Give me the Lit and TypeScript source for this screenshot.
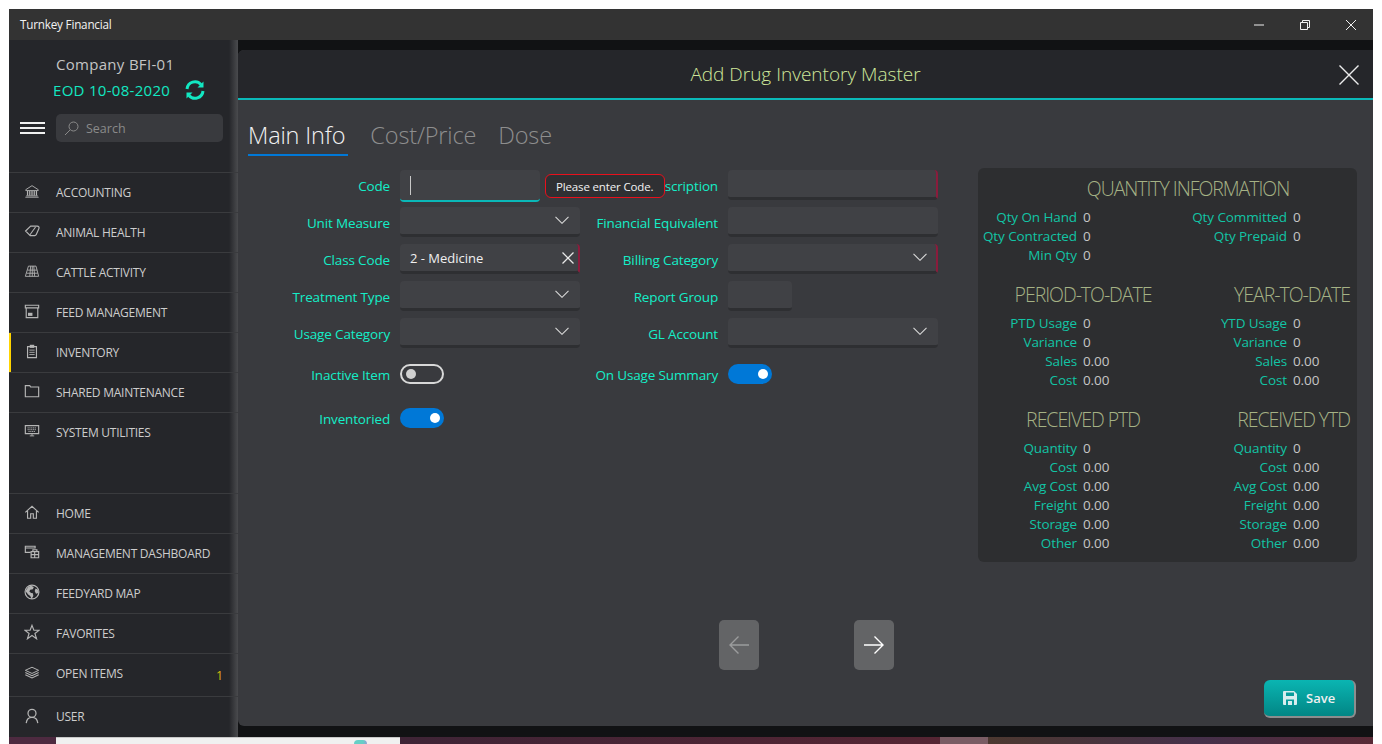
import { LitElement, html, css, svg } from 'lit';
import { customElement } from 'lit/decorators.js';

const NAV_ICONS: Record<string, unknown> = {
  bank: svg`<path d="M2 7.5 9 3l7 4.5v1H2z" fill="none" stroke="currentColor"/><path d="M4 9v5M6.5 9v5M9 9v5M11.5 9v5M14 9v5" stroke="currentColor" stroke-width="1.4"/><path d="M2.5 14.5h13M1.5 16h15" stroke="currentColor"/>`,
  tag: svg`<path d="M1.8 9 7.500 3.500h7.500a2 2 0 0 1 1.800 2.800l-3 6.700a2 2 0 0 1-1.800 1.200H7z" fill="none" stroke="currentColor" stroke-width="1.300"/><path d="M6.500 13.500 13 4.500" stroke="currentColor" stroke-width="1.200"/>`,
  grid: svg`<path d="M5 3.500h8.500L16.500 15h-15zM4 8h10.500M3 11.500h12.500M7.500 3.500 6.500 15M11 3.500 12 15M9.300 3.500V15" fill="none" stroke="currentColor"/>`,
  feed: svg`<path d="M1.500 2.500h15v3h-15zM2.500 5.500h13v11h-13z" fill="none" stroke="currentColor" stroke-width="1.300"/><path d="M4.500 11h5v3.500h-5z" fill="currentColor"/>`,
  clip: svg`<path d="M4 4h10v12.500H4z" fill="none" stroke="currentColor" stroke-width="1.300"/><path d="M6.500 2h5v3.500h-5z" fill="currentColor"/><path d="M6 8h6M6 10.500h6M6 13h6" stroke="currentColor"/>`,
  folder: svg`<path d="M1.500 3h5l1 1.500h9v11h-15z" fill="none" stroke="currentColor" stroke-width="1.300"/>`,
  monitor: svg`<path d="M1.500 3h15v9h-15z" fill="none" stroke="currentColor" stroke-width="1.300"/><path d="M4 5.500h10M4 7.500h10M5 9.500h8" stroke="currentColor" stroke-dasharray="1.400 .6"/><path d="M9 12v2.500M6.500 14.500h5" stroke="currentColor"/>`,
  home: svg`<path d="M1.500 9.500 9 2.500l7.500 7M4 8v8h3.500v-5h3v5H14V8" fill="none" stroke="currentColor" stroke-width="1.300"/>`,
  dash: svg`<path d="M1.500 2.500h11v2h-11zM1.500 2.500v7h6" fill="none" stroke="currentColor" stroke-width="1.300"/><path d="M8 8.500h8.500v7H8zM10 8.500V6.500h4.500v2M8 12h8.500M12 8.500V15.500" fill="none" stroke="currentColor" stroke-width="1.300"/>`,
  globe: svg`<circle cx="9" cy="9" r="7.800" fill="none" stroke="currentColor" stroke-width="1.300"/><path d="M5 3 8 2l3 1.500-1 2.500-3 .5-1 2 2 1.500 2 .5.500 3-2 3.500-1.500-3.500-2-1.500L1.500 8zM13 5l3 1.500.5 3.500-3 1-1.500-3z" fill="currentColor"/>`,
  star: svg`<path d="M9 1.500 11.100 7h6l-4.800 3.600 1.800 6L9 13l-5.100 3.600 1.800-6L.9 7h6z" fill="none" stroke="currentColor" stroke-width="1.300"/>`,
  layers: svg`<path d="M9 2.500 16.500 6 9 9.500 1.500 6z" fill="none" stroke="currentColor" stroke-width="1.100"/><path d="m1.500 8.500 7.500 3.500 7.500-3.500M1.500 11 9 14.500l7.500-3.500" fill="none" stroke="currentColor" stroke-width="1.200"/>`,
  user: svg`<circle cx="9" cy="6" r="4.500" fill="none" stroke="currentColor" stroke-width="1.400"/><path d="M2.500 17c.5-4.500 3-6.500 6.500-6.500s6 2 6.500 6.500" fill="none" stroke="currentColor" stroke-width="1.400"/>`,
};

const MENU_TOP = [
  ['bank', 'ACCOUNTING'],
  ['tag', 'ANIMAL HEALTH'],
  ['grid', 'CATTLE ACTIVITY'],
  ['feed', 'FEED MANAGEMENT'],
  ['clip', 'INVENTORY'],
  ['folder', 'SHARED MAINTENANCE'],
  ['monitor', 'SYSTEM UTILITIES'],
];

const MENU_BOTTOM = [
  ['home', 'HOME'],
  ['dash', 'MANAGEMENT DASHBOARD'],
  ['globe', 'FEEDYARD MAP'],
  ['star', 'FAVORITES'],
  ['layers', 'OPEN ITEMS'],
  ['user', 'USER'],
];

type Stat = [string, string];

const RECEIVED: Stat[] = [
  ['Quantity', '0'],
  ['Cost', '0.00'],
  ['Avg Cost', '0.00'],
  ['Freight', '0.00'],
  ['Storage', '0.00'],
  ['Other', '0.00'],
];

const chevron = html`<svg class="chev" width="14" height="8" viewBox="0 0 14 8"><path d="m.5.8 6.500 6.500L13.500.8" fill="none" stroke="currentColor" stroke-width="1.100"/></svg>`;

@customElement('app-root')
export class AppRoot extends LitElement {
  static styles = css`
    :host {
      display: block;
      width: 1382px;
      height: 744px;
      overflow: hidden;
      background: #fff;
      font-family: 'Open Sans', 'Noto Sans', sans-serif;
      color: #d0d0d0;
    }
    .window {
      margin: 9px 9px 0;
      height: 728px;
      display: flex;
      flex-direction: column;
    }
    .titlebar {
      height: 31px;
      flex: none;
      background: #333333;
      display: flex;
      align-items: center;
      padding-left: 11px;
      font-size: 11.7px;
      color: #f2f2f2;
      letter-spacing: -0.2px;
    }
    .title-name { flex: 1; margin-top: -2px; }
    .win-btn {
      width: 46px;
      display: flex;
      justify-content: center;
    }
    .win-btn svg { margin-left: 2px; }
    .body {
      flex: 1;
      display: flex;
      min-height: 0;
    }
    .sidebar {
      width: 229px;
      flex: none;
      background: #25262a;
      display: flex;
      flex-direction: column;
      position: relative;
    }
    .sidebar::after {
      content: '';
      position: absolute;
      top: 0;
      bottom: 0;
      right: 0;
      width: 9px;
      background: linear-gradient(to right, #25262a, #4a4b4e);
      pointer-events: none;
    }
    .brand {
      height: 132px;
      flex: none;
      display: flex;
      flex-direction: column;
    }
    .company {
      margin: 13px 0 0 47px;
      font-size: 15px;
      line-height: 22px;
      letter-spacing: 0.3px;
      color: #c4c4c4;
    }
    .eod {
      display: flex;
      align-items: center;
      margin: 3px 0 0 44px;
      font-size: 15px;
      line-height: 24px;
      letter-spacing: 0.3px;
      color: #12e8c2;
    }
    .eod svg { margin-left: 15px; }
    .search-row {
      display: flex;
      align-items: center;
      margin-top: 12px;
    }
    .burger {
      width: 25px;
      margin-left: 11px;
      height: 12px;
      border-top: 2px solid #f0f0f0;
      border-bottom: 2px solid #f0f0f0;
      position: relative;
      box-sizing: border-box;
    }
    .burger::after {
      content: '';
      position: absolute;
      left: 0;
      right: 0;
      top: 3px;
      height: 2px;
      background: #f0f0f0;
    }
    .search {
      margin-left: 11px;
      width: 167px;
      height: 28px;
      border-radius: 5px;
      background: #393a3e;
      display: flex;
      align-items: center;
      box-sizing: border-box;
      padding: 1px 0 0 8px;
      font-size: 12.5px;
      color: #8a8a8a;
      gap: 7px;
    }
    .menu { flex: none; }
    .menu-gap { flex: 1; }
    .item {
      height: 40px;
      box-sizing: border-box;
      border-top: 1px solid #3a3b3e;
      display: flex;
      align-items: center;
      font-size: 12px;
      color: #cdcdcd;
      letter-spacing: -0.25px;
      padding: 0 0 1px 15px;
      position: relative;
      z-index: 1;
    }
    .item svg { flex: none; margin-right: 16px; margin-top: -2px; color: #b5b5b5; }
    .item.active { box-shadow: inset 2px 0 0 #ffd400; }
    .item.tall { height: 43px; padding-bottom: 3px; }
    .item.last { height: 41px; }
    .count {
      margin-left: auto;
      margin-right: 15px;
      margin-top: 3px;
      color: #d8b80e;
      font-size: 12.5px;
    }
    .main {
      flex: 1;
      min-width: 0;
      background: #111214;
      padding: 10px 0 11px;
      display: flex;
    }
    .modal {
      flex: 1;
      background: #393a3e;
      border-radius: 6px 0 0 6px;
      display: flex;
      flex-direction: column;
      overflow: hidden;
    }
    .modal-head {
      height: 50px;
      box-sizing: border-box;
      flex: none;
      background: #25262a;
      border-bottom: 2px solid #0ab8b8;
      display: flex;
      align-items: center;
      justify-content: center;
      position: relative;
      font-size: 19px;
      font-weight: 300;
      color: #cfe89a;
    }
    .modal-close {
      position: absolute;
      right: 14px;
      top: 15px;
      display: flex;
    }
    .modal-body {
      flex: 1;
      display: flex;
      flex-direction: column;
      padding: 0 16px 0 10px;
      position: relative;
    }
    .tabs {
      display: flex;
      height: 56px;
      flex: none;
      padding-top: 17px;
      box-sizing: border-box;
      gap: 22px;
      font-size: 23.5px;
      line-height: 36px;
      font-weight: 300;
      color: #8e8e8e;
      letter-spacing: -0.15px;
    }
    .tab {
      height: 39px;
      box-sizing: border-box;
    }
    .tab.on {
      color: #f2f2f2;
      border-bottom: 2px solid #0078d7;
      padding: 0 3px 0 0;
    }
    .columns {
      display: flex;
      align-items: flex-start;
      margin-top: 12px;
    }
    .form {
      width: 730px;
      flex: none;
      margin-top: 2px;
      display: grid;
      grid-template-columns: 152px 180px 148px 210px;
      grid-template-rows: repeat(5, 30px) 29px 37px;
      row-gap: 7px;
    }
    .lbl {
      box-sizing: border-box;
      display: flex;
      align-items: center;
      justify-content: flex-end;
      padding: 2px 10px 0 0;
      font-size: 13.5px;
      color: #14eec8;
      letter-spacing: -0.15px;
      white-space: nowrap;
    }
    .field {
      box-sizing: border-box;
      height: 30px;
      background: #404145;
      border-radius: 4px;
      border-bottom: 3px solid #2e2f32;
      display: flex;
      align-items: center;
      padding: 0 11px 0 10px;
      font-size: 13px;
      color: #f0f0f0;
    }
    .field.req { border-right: 2px solid #8a1c3c; padding-right: 9px; }
    .field.short { width: 64px; }
    .field.focus {
      width: 140px;
      height: 32px;
      border-bottom: 2px solid #0ab8b8;
    }
    .caret { width: 1px; height: 19px; background: #c8c8c8; }
    .chev { color: #d8d8d8; margin: -2px 0 0 auto; }
    .clear { margin: 0 -5px 0 auto; }
    .tip {
      position: absolute;
      left: 307px;
      top: 74px;
      width: 120px;
      height: 24px;
      box-sizing: border-box;
      border: 1px solid #e8101c;
      border-radius: 6px;
      background: #2f3033;
      color: #f2f2f2;
      font-size: 11.5px;
      display: flex;
      align-items: center;
      padding-left: 10px;
      letter-spacing: -0.15px;
      white-space: nowrap;
    }
    .sw { align-self: end; height: 20px; }
    .switch {
      box-sizing: border-box;
      width: 44px;
      height: 20px;
      border-radius: 10px;
      display: flex;
      align-items: center;
    }
    .switch.off {
      border: 2px solid #d8d8d8;
      padding-left: 4px;
    }
    .switch.on {
      background: #0078d7;
      justify-content: flex-end;
      padding-right: 4px;
    }
    .knob { width: 10px; height: 10px; border-radius: 50%; background: #fff; }
    .switch.off .knob { background: #d0d0d0; }
    .panel {
      width: 379px;
      height: 394px;
      flex: none;
      box-sizing: border-box;
      background: #2d2e30;
      border-radius: 6px;
      display: grid;
      grid-template-columns: 210px 169px;
      align-content: start;
    }
    .panel h3 {
      margin: 0;
      font-size: 19.5px;
      line-height: 24px;
      font-weight: 300;
      color: #a5b285;
      letter-spacing: -1.05px;
      white-space: nowrap;
    }
    .panel h3.wide { grid-column: 1 / 3; padding: 9px 0 7px 41px; text-align: center; }
    .panel h3.left { text-align: center; }
    .panel h3.right { text-align: right; padding-right: 7px; }
    .panel h3.sec-title { padding-top: 18px; padding-bottom: 7px; }
    .stats {
      display: grid;
      grid-template-columns: 99px auto;
      column-gap: 6px;
      grid-auto-rows: 19px;
      justify-content: start;
      font-size: 13.5px;
      line-height: 19px;
      letter-spacing: -0.1px;
      white-space: nowrap;
    }
    .stats .k { text-align: right; color: #12c4a5; }
    .stats .v { color: #c6c6c6; }
    .pager {
      flex: none;
      margin: 58px 0 0 471px;
      display: flex;
      gap: 95px;
    }
    .pager button {
      width: 40px;
      height: 50px;
      border: none;
      padding: 0;
      border-radius: 5px;
      background: #636466;
      display: flex;
      align-items: center;
      justify-content: center;
      color: #fff;
    }
    .pager button.dim { color: #9b9c9d; }
    .save {
      flex: none;
      align-self: flex-end;
      margin: 10px 1px 0 0;
      width: 92px;
      height: 38px;
      box-sizing: border-box;
      border: none;
      border-right: 2px solid #8c8d8e;
      border-bottom: 2px solid #8c8d8e;
      border-radius: 6px;
      background: linear-gradient(#0ab5b2, #028685);
      color: #f0f0f0;
      font: 600 13px 'Open Sans', sans-serif;
      display: flex;
      align-items: center;
      padding: 0 0 0 19px;
      gap: 9px;
    }
    .desktop {
      height: 7px;
      margin: 0 9px;
      display: flex;
      overflow: hidden;
      background: #4d2a40;
    }
    .paper {
      box-sizing: border-box;
      margin-left: 47px;
      width: 344px;
      background: #f0f0f0;
      border-top: 1px solid #c8c8c8;
      display: flex;
      justify-content: flex-end;
      padding: 2px 33px 0 0;
    }
    .paper i {
      display: block;
      width: 13px;
      height: 6px;
      border-radius: 4px 4px 0 0;
      background: linear-gradient(to right, #66cfc6 70%, #8f9fd8);
    }
    .dim-a { width: 540px; background: linear-gradient(to right, #3e2436, #552533); }
    .dim-b { width: 48px; background: #7a5c64; }
    .dim-c {
      flex: 1;
      padding-left: 286px;
      background: linear-gradient(to right, #4c3830, #45304a 55%, #582a36);
      color: #fff;
      font-size: 11.5px;
      line-height: 16px;
    }
    .dim-c span { display: block; margin-top: 5px; }
  `;

  private navItem(icon: string, label: string, cls = '') {
    return html`<div class="item ${cls}">
      <svg width="16" height="16" viewBox="0 0 18 18">${NAV_ICONS[icon]}</svg>
      <span>${label}</span>
      ${label === 'OPEN ITEMS' ? html`<span class="count">1</span>` : ''}
    </div>`;
  }

  private stats(rows: Stat[]) {
    return html`<div class="stats">
      ${rows.map(([k, v]) => html`<span class="k">${k}</span><span class="v">${v}</span>`)}
    </div>`;
  }

  render() {
    return html`
      <div class="window">
        <div class="titlebar">
          <span class="title-name">Turnkey Financial</span>
          <div class="win-btn">
            <svg width="12" height="12" viewBox="0 0 12 12"><path d="M1 6h10" stroke="#f0f0f0" stroke-width="1"/></svg>
          </div>
          <div class="win-btn">
            <svg width="12" height="12" viewBox="0 0 12 12"><path d="M1.500 3.500h7v7h-7zM3.500 3.500v-2h7v7h-2" fill="none" stroke="#f0f0f0"/></svg>
          </div>
          <div class="win-btn">
            <svg width="12" height="12" viewBox="0 0 12 12"><path d="m1 1 10 10M11 1 1 11" stroke="#f0f0f0"/></svg>
          </div>
        </div>
        <div class="body">
          <aside class="sidebar">
            <div class="brand">
              <div class="company">Company BFI-01</div>
              <div class="eod">
                <span>EOD 10-08-2020</span>
                <svg width="20" height="20" viewBox="0 0 20 20" fill="none" stroke="#12e8c2" stroke-width="3">
                  <path d="M2 9a8 8 0 0 1 14-4.500"/>
                  <path d="M18 11a8 8 0 0 1-14 4.500"/>
                  <path d="M18.500 1.500v6h-6z" fill="#12e8c2" stroke="none"/>
                  <path d="M1.500 18.500v-6h6z" fill="#12e8c2" stroke="none"/>
                </svg>
              </div>
              <div class="search-row">
                <div class="burger"></div>
                <div class="search">
                  <svg width="15" height="15" viewBox="0 0 15 15" fill="none" stroke="#8a8a8a"><circle cx="9.500" cy="5.500" r="4.500"/><path d="M6.200 8.800 1 14"/></svg>
                  <span>Search</span>
                </div>
              </div>
            </div>
            <div class="menu">
              ${MENU_TOP.map(([i, l]) => this.navItem(i, l, l === 'INVENTORY' ? 'active' : ''))}
            </div>
            <div class="menu-gap"></div>
            <div class="menu">
              ${MENU_BOTTOM.map(([i, l]) =>
                this.navItem(i, l, l === 'OPEN ITEMS' ? 'tall' : l === 'USER' ? 'last' : ''))}
            </div>
          </aside>
          <main class="main">
            <section class="modal">
              <header class="modal-head">
                <span>Add Drug Inventory Master</span>
                <div class="modal-close">
                  <svg width="20" height="20" viewBox="0 0 20 20"><path d="m.5.500 19 19M19.500.500l-19 19" stroke="#ececec" stroke-width="1.400"/></svg>
                </div>
              </header>
              <div class="modal-body">
                <nav class="tabs">
                  <div class="tab on">Main Info</div>
                  <div class="tab">Cost/Price</div>
                  <div class="tab">Dose</div>
                </nav>
                <div class="columns">
                  <div class="form">
                    <div class="lbl">Code</div>
                    <div class="field focus"><span class="caret"></span></div>
                    <div class="lbl">Description</div>
                    <div class="field req"></div>

                    <div class="lbl">Unit Measure</div>
                    <div class="field">${chevron}</div>
                    <div class="lbl">Financial Equivalent</div>
                    <div class="field"></div>

                    <div class="lbl">Class Code</div>
                    <div class="field req">
                      <span>2 - Medicine</span>
                      <svg class="clear" width="12" height="12" viewBox="0 0 12 12"><path d="m.5.500 11 11M11.500.500l-11 11" stroke="#e8e8e8" stroke-width="1.300"/></svg>
                    </div>
                    <div class="lbl">Billing Category</div>
                    <div class="field req">${chevron}</div>

                    <div class="lbl">Treatment Type</div>
                    <div class="field">${chevron}</div>
                    <div class="lbl">Report Group</div>
                    <div class="field short"></div>

                    <div class="lbl">Usage Category</div>
                    <div class="field">${chevron}</div>
                    <div class="lbl">GL Account</div>
                    <div class="field">${chevron}</div>

                    <div class="lbl sw">Inactive Item</div>
                    <div class="sw"><div class="switch off"><span class="knob"></span></div></div>
                    <div class="lbl sw">On Usage Summary</div>
                    <div class="sw"><div class="switch on"><span class="knob"></span></div></div>

                    <div class="lbl sw">Inventoried</div>
                    <div class="sw"><div class="switch on"><span class="knob"></span></div></div>
                  </div>
                  <div class="panel">
                    <h3 class="wide">QUANTITY INFORMATION</h3>
                    ${this.stats([['Qty On Hand', '0'], ['Qty Contracted', '0'], ['Min Qty', '0']])}
                    ${this.stats([['Qty Committed', '0'], ['Qty Prepaid', '0']])}
                    <h3 class="left sec-title">PERIOD-TO-DATE</h3>
                    <h3 class="right sec-title">YEAR-TO-DATE</h3>
                    ${this.stats([['PTD Usage', '0'], ['Variance', '0'], ['Sales', '0.00'], ['Cost', '0.00']])}
                    ${this.stats([['YTD Usage', '0'], ['Variance', '0'], ['Sales', '0.00'], ['Cost', '0.00']])}
                    <h3 class="left sec-title">RECEIVED PTD</h3>
                    <h3 class="right sec-title">RECEIVED YTD</h3>
                    ${this.stats(RECEIVED)}
                    ${this.stats(RECEIVED)}
                  </div>
                </div>
                <div class="tip">Please enter Code.</div>
                <div class="pager">
                  <button class="dim" aria-label="Previous">
                    <svg width="20" height="18" viewBox="0 0 20 18" fill="none" stroke="currentColor" stroke-width="1.400"><path d="M20 9H1M9.500.500 1 9l8.500 8.500"/></svg>
                  </button>
                  <button aria-label="Next">
                    <svg width="20" height="18" viewBox="0 0 20 18" fill="none" stroke="currentColor" stroke-width="1.400"><path d="M0 9h19M10.500.500 19 9l-8.500 8.500"/></svg>
                  </button>
                </div>
                <button class="save">
                  <svg width="14" height="14" viewBox="0 0 14 14"><path d="M1 0h10l3 3v10a1 1 0 0 1-1 1H1a1 1 0 0 1-1-1V1a1 1 0 0 1 1-1z" fill="#d8eeee"/><path d="M3 1.500h8v3.500H3z" fill="#0a9c9a"/><path d="M3 8.500h8V14H3z" fill="#0a9c9a"/><path d="M5 10h4v4H5z" fill="#d8eeee"/></svg>
                  <span>Save</span>
                </button>
              </div>
            </section>
          </main>
        </div>
      </div>
      <div class="desktop">
        <div class="paper"><i></i></div>
        <div class="dim-a"></div>
        <div class="dim-b"></div>
        <div class="dim-c"><span>20:13</span></div>
      </div>
    `;
  }
}
